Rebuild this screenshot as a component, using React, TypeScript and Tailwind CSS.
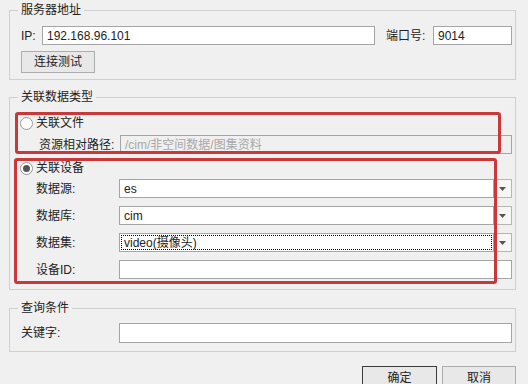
const FONT = '"Liberation Sans", "Noto Sans CJK SC", sans-serif'

function Field({ value = '', className = '', disabled = false }: { value?: string; className?: string; disabled?: boolean }) {
  return (
    <div
      className={`flex h-[19px] items-center border border-[#a5a5a5] px-[4px] text-[12px] ${
        disabled ? 'bg-[#f0f0f0] text-[#a8a8a8]' : 'bg-white text-[#222]'
      } ${className}`}
    >
      {value}
    </div>
  )
}

function Combo({ value, focused = false }: { value: string; focused?: boolean }) {
  return (
    <div className="flex h-[19px] flex-1">
      <div className="flex flex-1 items-center border border-[#a5a5a5] bg-white p-px text-[12px] text-[#222]">
        <div className={`flex h-full flex-1 items-center pl-[2px] ${focused ? 'border border-dotted border-black' : 'border border-transparent'}`}>
          {value}
        </div>
      </div>
      <div className="flex w-[18px] items-center justify-center border border-l-0 border-[#b5b5b5] bg-[#f6f6f6]">
        <svg width="7" height="4" viewBox="0 0 7 4">
          <path d="M0 0h7L3.5 4z" fill="#555" />
        </svg>
      </div>
    </div>
  )
}

function Radio({ checked, label }: { checked: boolean; label: string }) {
  return (
    <div className="flex h-[18px] items-center gap-[3px] pl-[10px] text-[12px] leading-[18px] text-[#222]">
      <span className="flex h-[13px] w-[13px] items-center justify-center rounded-full border border-[#9a9a9a] bg-white">
        {checked && <span className="h-[7px] w-[7px] rounded-full bg-[#555]" />}
      </span>
      {label}
    </div>
  )
}

function Row({ label, children, indent = 'pl-[26px]' }: { label: string; children: React.ReactNode; indent?: string }) {
  return (
    <div className={`flex items-center text-[12px] text-[#222] ${indent}`}>
      <span className="w-[83px] shrink-0">{label}</span>
      {children}
    </div>
  )
}

export default function App() {
  return (
    <div className="relative h-[384px] w-[528px] overflow-hidden bg-[#f0f0f0] pt-[2px]" style={{ fontFamily: FONT }}>
      <fieldset className="ml-[9px] w-[507px] border border-[#cfcfcf] pb-[6px]">
        <legend className="ml-[8px] px-[3px] text-[12px] leading-[16px] text-[#222]">服务器地址</legend>
        <div className="flex items-center pl-[11px] pt-[8px] text-[12px] text-[#222]">
          <span className="w-[21px]">IP:</span>
          <Field value="192.168.96.101" className="w-[333px]" />
          <span className="ml-[11px] w-[47px]">端口号:</span>
          <Field value="9014" className="w-[79px]" />
        </div>
        <button className="ml-[11px] mt-[6px] h-[22px] w-[74px] border border-[#adadad] bg-[#e8e8e8] text-[12px] text-[#222]">
          连接测试
        </button>
      </fieldset>

      <fieldset className="ml-[9px] mt-[9px] w-[507px] border border-[#cfcfcf] pb-[10px]">
        <legend className="ml-[8px] px-[3px] text-[12px] leading-[16px] text-[#222]">关联数据类型</legend>
        <div className="flex flex-col pt-[9px]">
          <Radio checked={false} label="关联文件" />
          <div className="mt-[3px]">
            <Row label="资源相对路径:" indent="pl-[29px]">
              <Field value="/cim/非空间数据/图集资料" disabled className="ml-[-2px] w-[392px]" />
            </Row>
          </div>
          <div className="mt-[5px]">
            <Radio checked label="关联设备" />
          </div>
          <div className="mt-[2px] flex flex-col gap-[8px] pr-[3px]">
            <Row label="数据源:">
              <Combo value="es" />
            </Row>
            <Row label="数据库:">
              <Combo value="cim" />
            </Row>
            <Row label="数据集:">
              <Combo value="video(摄像头)" focused />
            </Row>
            <Row label="设备ID:">
              <Field className="flex-1" />
            </Row>
          </div>
        </div>
      </fieldset>

      <fieldset className="ml-[9px] mt-[10px] w-[507px] border border-[#cfcfcf] pb-[8px]">
        <legend className="ml-[8px] px-[3px] text-[12px] leading-[16px] text-[#222]">查询条件</legend>
        <div className="pr-[3px] pt-[7px]">
          <Row label="关键字:" indent="pl-[11px]">
            <Field className="ml-[15px] h-[20px] flex-1" />
          </Row>
        </div>
      </fieldset>

      <div className="mr-[12px] mt-[14px] flex justify-end gap-[5px]">
        <button className="h-[24px] w-[75px] border border-[#3c3c3c] bg-[#e8e8e8] text-[12px] text-[#222]">确定</button>
        <button className="h-[24px] w-[74px] border border-[#adadad] bg-[#e8e8e8] text-[12px] text-[#222]">取消</button>
      </div>

      {/* red annotation boxes drawn over the dialog */}
      <div className="pointer-events-none absolute left-[15px] top-[112px] h-[42px] w-[486px] rounded-[3px] border-[3px] border-[#c9393a]" />
      <div className="pointer-events-none absolute left-[14px] top-[158px] h-[126px] w-[483px] rounded-[3px] border-[3px] border-[#c9393a]" />
    </div>
  )
}
